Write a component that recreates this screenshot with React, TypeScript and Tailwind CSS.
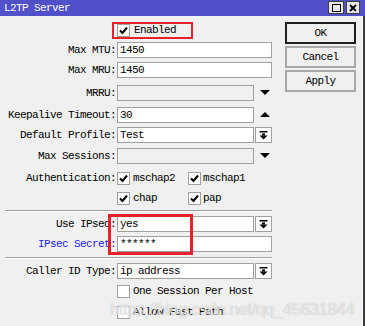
import React from "react";

const Check = () => (
  <svg width="9" height="9" viewBox="0 0 9 9">
    <path d="M1 4.5 L3.5 7 L8 1.5" stroke="#000" strokeWidth="2" fill="none" />
  </svg>
);

const CheckBox = ({ checked }: { checked: boolean }) => (
  <div className="w-[13px] h-[13px] bg-white border border-[#a0a0a0] flex items-center justify-center shrink-0">
    {checked ? <Check /> : null}
  </div>
);

const DropIcon = () => (
  <svg width="9" height="9" viewBox="0 0 9 9">
    <rect x="0.5" y="0" width="8" height="1.5" fill="#000" />
    <rect x="3" y="2.5" width="3" height="2" fill="#000" />
    <polygon points="0.5,4.5 8.5,4.5 4.5,8.5" fill="#000" />
  </svg>
);

const TriDown = () => (
  <svg width="10" height="6" viewBox="0 0 10 6">
    <polygon points="0,0 10,0 5,5" fill="#000" />
  </svg>
);
const TriUp = () => (
  <svg width="10" height="6" viewBox="0 0 10 6">
    <polygon points="0,5 10,5 5,0" fill="#000" />
  </svg>
);

type Kind = "full" | "drop" | "down" | "up";

const Field = ({
  label,
  value,
  kind,
  disabled,
  mt,
  blue,
}: {
  label: string;
  value?: string;
  kind: Kind;
  disabled?: boolean;
  mt: string;
  blue?: boolean;
}) => (
  <div className={`flex items-center h-[16px] ${mt}`}>
    <div className={`w-[116px] text-right whitespace-nowrap ${blue ? "text-[#1a1aff]" : "text-black"}`}>{label}</div>
    <div
      className={`ml-[1px] h-[16px] border border-[#a0a0a0] flex items-center pl-[2px] ${
        disabled ? "bg-[#f0f0f0]" : "bg-white"
      } ${kind === "full" ? "w-[155px]" : "w-[137px]"}`}
    >
      {value}
    </div>
    {kind === "drop" && (
      <div className="ml-[1px] w-[17px] h-[16px] bg-white border border-[#a0a0a0] flex items-center justify-center">
        <DropIcon />
      </div>
    )}
    {kind === "down" && (
      <div className="ml-[1px] w-[17px] h-[16px] flex items-center justify-center pl-[2px]">
        <TriDown />
      </div>
    )}
    {kind === "up" && (
      <div className="ml-[1px] w-[17px] h-[16px] flex items-center justify-center pl-[2px]">
        <TriUp />
      </div>
    )}
  </div>
);

const Sep = ({ mt }: { mt: string }) => (
  <div className={`ml-[5px] w-[267px] h-[2px] border-t border-t-[#a0a0a0] border-b border-b-white ${mt}`} />
);

const Btn = ({ text, primary, mt }: { text: string; primary?: boolean; mt: string }) => (
  <div
    className={`w-[71px] h-[22px] flex items-center justify-center ${mt} ${
      primary ? "border-2 border-[#202020]" : "border-2 border-[#a8a8a8]"
    } bg-[#f0f0f0]`}
  >
    {text}
  </div>
);

export default function App() {
  return (
    <div className="w-[365px] h-[326px] bg-[#f0f0f0] relative overflow-hidden font-['Liberation_Mono',monospace] text-[11px] tracking-[-0.6px] text-black leading-none">
      {/* Title bar */}
      <div className="h-[16px] bg-[#5050c8] flex items-center justify-between">
        <div className="pl-[4px] text-white">L2TP Server</div>
        <div className="flex items-center gap-[2px] pr-[5px] self-start pt-[1px]">
          <div className="w-[16px] h-[13px] bg-[#e8e8e8] border border-[#404040] flex items-center justify-center">
            <div className="w-[9px] h-[8px] border border-black" />
          </div>
          <div className="w-[14px] h-[13px] bg-[#e8e8e8] border border-[#404040] flex items-center justify-center">
            <svg width="8" height="8" viewBox="0 0 8 8">
              <path d="M1 1 L7 7 M7 1 L1 7" stroke="#000" strokeWidth="2" />
            </svg>
          </div>
        </div>
      </div>

      {/* Body */}
      <div className="h-[310px] border-r-2 border-r-[#3a3a3a]">
        <div className="h-full border-r border-r-white flex">
          {/* Form */}
          <div className="w-[280px] flex flex-col">
            <div className="flex items-center h-[13px] mt-[8px] ml-[117px]">
              <CheckBox checked />
              <span className="ml-[4px]">Enabled</span>
            </div>
            <Field label="Max MTU:" value="1450" kind="full" mt="mt-[5px]" />
            <Field label="Max MRU:" value="1450" kind="full" mt="mt-[4px]" />
            <Field label="MRRU:" kind="down" disabled mt="mt-[7px]" />
            <Field label="Keepalive Timeout:" value="30" kind="up" mt="mt-[6px]" />
            <Field label="Default Profile:" value="Test" kind="drop" mt="mt-[4px]" />
            <Field label="Max Sessions:" kind="down" disabled mt="mt-[5px]" />
            <div className="flex items-center h-[13px] mt-[8px]">
              <div className="w-[116px] text-right">Authentication:</div>
              <div className="ml-[1px] flex items-center w-[71px]">
                <CheckBox checked />
                <span className="ml-[3px]">mschap2</span>
              </div>
              <div className="flex items-center">
                <CheckBox checked />
                <span className="ml-[2px]">mschap1</span>
              </div>
            </div>
            <div className="flex items-center h-[13px] mt-[7px]">
              <div className="w-[116px]" />
              <div className="ml-[1px] flex items-center w-[71px]">
                <CheckBox checked />
                <span className="ml-[3px]">chap</span>
              </div>
              <div className="flex items-center">
                <CheckBox checked />
                <span className="ml-[2px]">pap</span>
              </div>
            </div>
            <Sep mt="mt-[5px]" />
            <Field label="Use IPsec:" value="yes" kind="drop" mt="mt-[4px]" />
            <Field label="IPsec Secret:" value="******" kind="full" blue mt="mt-[4px]" />
            <Sep mt="mt-[5px]" />
            <Field label="Caller ID Type:" value="ip address" kind="drop" mt="mt-[4px]" />
            <div className="flex items-center h-[13px] mt-[6px] ml-[117px]">
              <CheckBox checked={false} />
              <span className="ml-[3px]">One Session Per Host</span>
            </div>
            <div className="flex items-center h-[13px] mt-[8px] ml-[117px]">
              <CheckBox checked={false} />
              <span className="ml-[3px]">Allow Fast Path</span>
            </div>
          </div>
          {/* Buttons */}
          <div className="ml-[5px] flex flex-col">
            <Btn text="OK" primary mt="mt-[6px]" />
            <Btn text="Cancel" mt="mt-[2px]" />
            <Btn text="Apply" mt="mt-[2px]" />
          </div>
        </div>
      </div>

      {/* Annotation rectangles */}
      <div className="absolute left-[112px] top-[22px] w-[81px] h-[17px] border-2 border-[#e8202a] pointer-events-none" />
      <div className="absolute left-[108px] top-[214px] w-[85px] h-[41px] border-[3px] border-[#e8202a] pointer-events-none" />

      {/* Watermark */}
      <div className="absolute left-[110px] top-[301px] font-['Liberation_Sans',sans-serif] text-[17px] tracking-[-0.5px] text-white/70 [text-shadow:0_0_1px_rgba(120,120,120,0.6)] pointer-events-none whitespace-nowrap">
        https://blog.csdn.net/qq_45631844
      </div>
    </div>
  );
}
